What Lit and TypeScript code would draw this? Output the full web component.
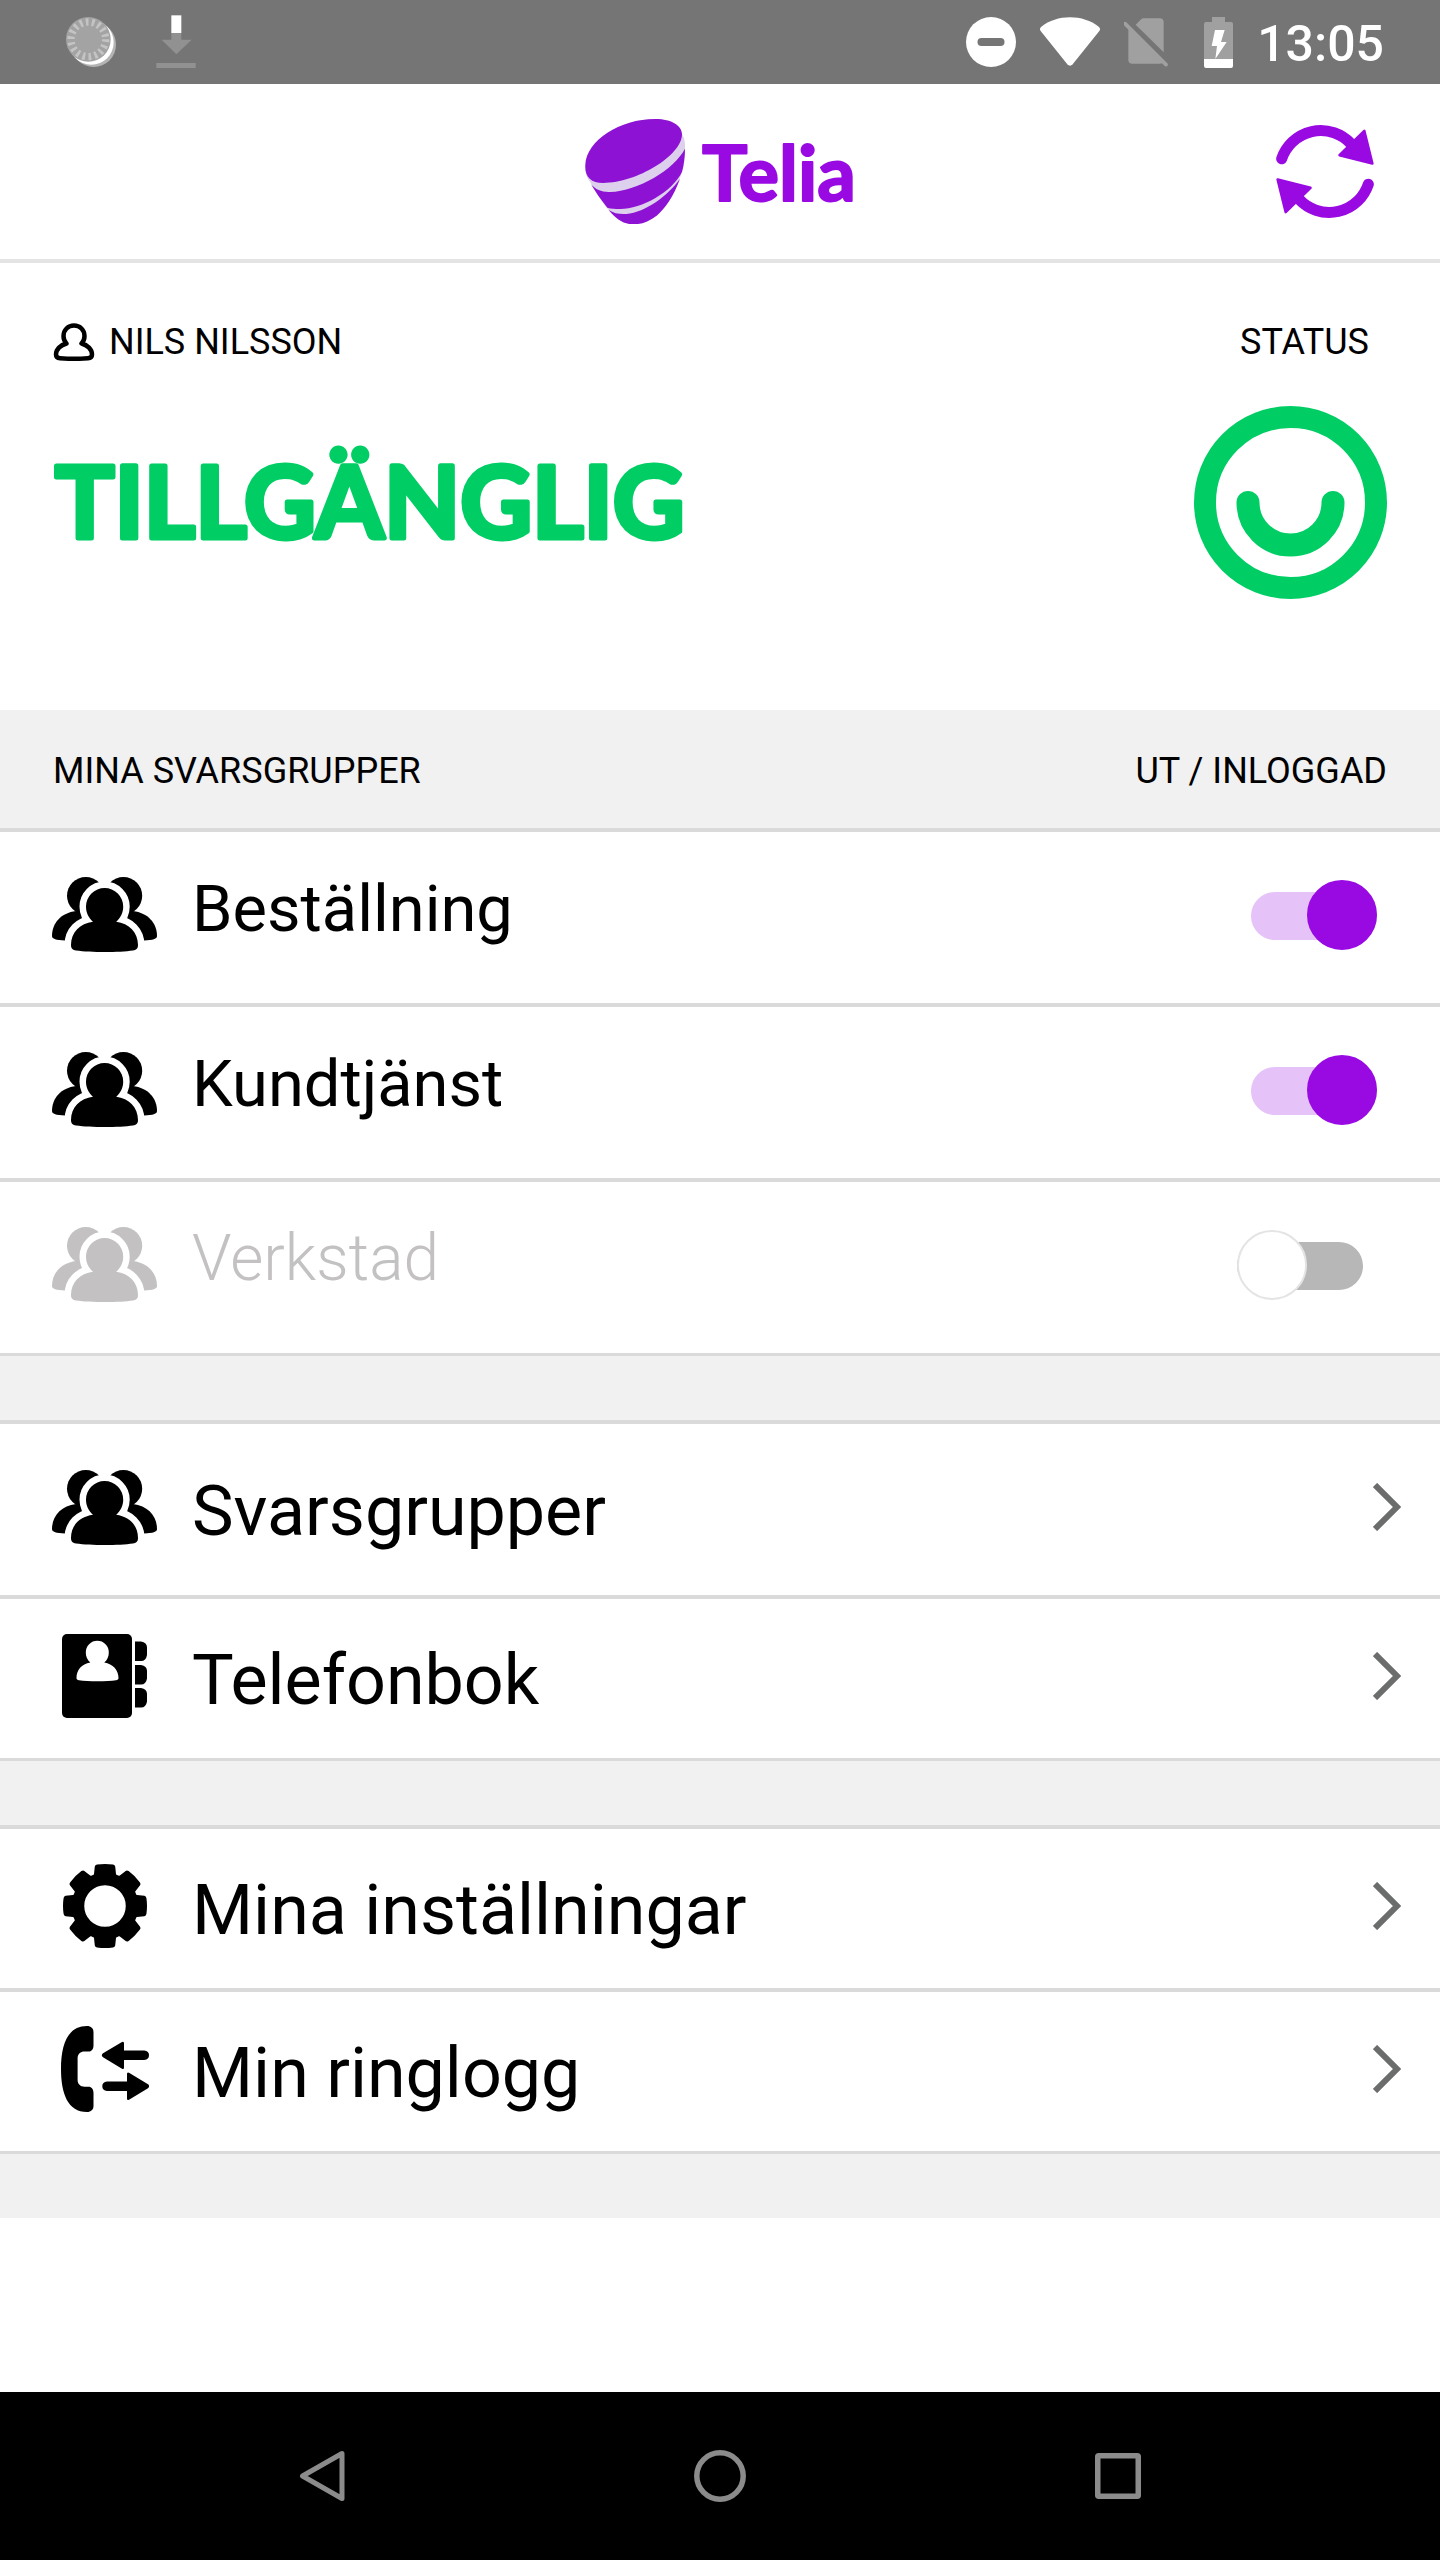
import { LitElement, html, svg, css, nothing } from "lit";
import { customElement, property, state } from "lit/decorators.js";

interface Group {
  name: string;
  on: boolean;
}

type IconName = "people" | "book" | "gear" | "calls";

const people = svg`
  <svg class="icon" width="105" height="75" viewBox="0 0 105 75" fill="currentColor" aria-hidden="true">
    <ellipse cx="33.8" cy="18.8" rx="18.8" ry="18.8"/>
    <ellipse cx="71.4" cy="18.8" rx="18.8" ry="18.8"/>
    <path d="M24 34C9 36 0 46 0 59c0 3 4 4 13 4.500L40 60V34z"/>
    <path d="M81 34c15 2 24 12 24 25 0 3-4 4-13 4.500L65 60V34z"/>
    <path class="halo" d="M52.600 11a18.600 18.600 0 0 1 18.600 18.700c0 6-2.500 11-7 15C77 46.500 86 55 86 68c0 4-2 5-5 5.500-14 2-42 2-57 0-3-.5-5-1.500-5-5.500 0-13 9-21.500 22-23.300-4.500-4-7-9-7-15A18.600 18.600 0 0 1 52.600 11z"/>
    <path d="M52.600 11a18.600 18.600 0 0 1 18.600 18.700c0 6-2.500 11-7 15C77 46.500 86 55 86 68c0 4-2 5-5 5.500-14 2-42 2-57 0-3-.5-5-1.500-5-5.500 0-13 9-21.500 22-23.300-4.500-4-7-9-7-15A18.600 18.600 0 0 1 52.600 11z"/>
  </svg>`;

const book = svg`
  <svg class="icon" width="85" height="84" viewBox="0 0 85 84" fill="currentColor" aria-hidden="true">
    <rect width="70" height="84" rx="5"/>
    <path d="M73 7.500h6q6 1 6 6v7.500q-1 6-6 6h-6zM73 31h6q6 1 6 6v7.500q-1 6-6 6h-6zM73 54h6q6 1 6 6v7.500q-1 6-6 6h-6z"/>
    <path fill="#fff" d="M35.300 6.800a11.500 11.500 0 0 1 11.500 11.700c0 4-1.500 7.500-4.500 10C51 30 56.500 36 56.500 44c0 1.500-1 2-2.500 2.200-9 1.300-28 1.300-37 0-1.500-.2-2.500-.7-2.500-2.200 0-8 5-14 13.800-15.500-3-2.500-4.500-6-4.500-10A11.500 11.500 0 0 1 35.300 6.800z"/>
  </svg>`;

const gear = svg`
  <svg class="icon" width="84" height="84" viewBox="0 0 84 84" fill="currentColor" aria-hidden="true">
    <circle cx="42" cy="42" r="27" fill="none" stroke="currentColor" stroke-width="12.500"/>
    ${[0, 45, 90, 135, 180, 225, 270, 315].map(
      (a) => svg`<path transform=${`rotate(${a} 42 42)`} d="M34 0.600q8-1.200 16 0 2 .4 2.200 2L53 10l3 7H28l3-7 .8-7.400q.2-1.600 2.200-2z"/>`
    )}
  </svg>`;

const calls = svg`
  <svg class="icon" width="88" height="86" viewBox="0 0 88 86" fill="currentColor" aria-hidden="true">
    <path d="M26 0C7 0 0 18 0 43s7 43 26 43c4 0 6.500-2.500 6.500-6V67c0-4-2-6.300-5-6.300h-4c-4 0-6.900-2.700-6.900-6.700V32.300c0-4 2.900-6.700 6.900-6.700h4c3 0 5-2.300 5-6.300V6c0-3.500-2.500-6-6.500-6z"/>
    <path d="M42 27.300 61 16q2-1 2 1.200v7.400h20.300q4.700.4 4.700 4.700t-4.700 4.700H63v7.600q0 2.200-2 1.200L42 31.200q-2.400-1.900 0-3.900z"/>
    <path d="M87 58.300 68 46.700q-2-1-2 1.200v7.700H46q-4.700.4-4.700 4.700T46 65h20v7.600q0 2.200 2 1.200l19-11.600q2.400-1.900 0-3.900z"/>
  </svg>`;

const icons: Record<IconName, unknown> = { people, book, gear, calls };

/** A white row that opens another screen. */
@customElement("menu-link")
export class MenuLink extends LitElement {
  @property() label = "";
  @property() icon: IconName = "people";
  @property() href = "#";

  static styles = css`
    :host {
      display: block;
      background: #fff;
    }
    .row {
      display: flex;
      align-items: center;
      gap: 35px;
      padding: 35px 39px 40px 52px;
      color: #000;
      text-decoration: none;
    }
    :host([tall]) .row {
      padding: 41px 39px 46px 52px;
    }
    .slot {
      display: flex;
      justify-content: center;
      align-items: center;
      flex: none;
      width: 105px;
      height: 84px;
    }
    .icon {
      display: block;
      flex: none;
    }
    .halo {
      stroke: #fff;
      stroke-width: 13;
    }
    .label {
      flex: 1;
      padding-top: 8px;
      font-size: 70px;
      line-height: 74px;
    }
    .chevron {
      flex: none;
      display: block;
    }
  `;

  render() {
    return html`
      <a class="row" href=${this.href}>
        <span class="slot">${icons[this.icon]}</span>
        <span class="label">${this.label}</span>
        <svg class="chevron" width="28" height="48" viewBox="0 0 28 48" fill="none" stroke="#6b6d6c" stroke-width="6" aria-hidden="true">
          <path d="M2 2 24 24 2 46"/>
        </svg>
      </a>
    `;
  }
}

/** A white row with an answer group and its log-in switch. */
@customElement("group-row")
export class GroupRow extends LitElement {
  @property() name = "";
  @property({ type: Boolean }) on = false;

  static styles = css`
    :host {
      display: block;
      background: #fff;
    }
    .row {
      display: flex;
      align-items: center;
      gap: 35px;
      padding: 44px 63px 50px 52px;
      color: #c3c1c2;
      font-size: 64px;
      font-weight: 300;
    }
    .row.on {
      color: #000;
      font-size: 65px;
      font-weight: 400;
    }
    .icon {
      flex: none;
      display: block;
    }
    .halo {
      stroke: #fff;
      stroke-width: 13;
    }
    .label {
      flex: 1;
      padding-bottom: 11px;
      line-height: 66px;
    }
    .switch {
      appearance: none;
      position: relative;
      flex: none;
      width: 140px;
      height: 70px;
      margin: 0;
    }
    .switch::before {
      content: "";
      position: absolute;
      inset: 12px 14px 10px 0;
      border-radius: 24px;
      background: #b7b7b7;
    }
    .switch::after {
      content: "";
      position: absolute;
      inset: 0 auto 0 0;
      width: 70px;
      box-sizing: border-box;
      border: 2px solid #e4e4e4;
      border-radius: 50%;
      background: #fff;
    }
    .switch:checked::before {
      inset: 12px 0 10px 14px;
      background: #e5c2f7;
    }
    .switch:checked::after {
      inset: 0 0 0 auto;
      border-color: #990ae3;
      background: #990ae3;
    }
  `;

  private toggle(e: Event) {
    this.on = (e.target as HTMLInputElement).checked;
  }

  render() {
    return html`
      <label class="row ${this.on ? "on" : ""}">
        ${people}
        <span class="label">${this.name}</span>
        <input class="switch" type="checkbox" role="switch" .checked=${this.on} @change=${this.toggle} />
      </label>
    `;
  }
}

@customElement("app-root")
export class AppRoot extends LitElement {
  @state() private groups: Group[] = [
    { name: "Beställning", on: true },
    { name: "Kundtjänst", on: true },
    { name: "Verkstad", on: false },
  ];

  static styles = css`
    :host {
      display: flex;
      flex-direction: column;
      min-height: 100vh;
      background: #fff;
      color: #000;
      font-family: Roboto, "Liberation Sans", sans-serif;
    }
    svg {
      display: block;
      flex: none;
    }
    button {
      padding: 0;
      border: 0;
      background: none;
      color: inherit;
      font: inherit;
    }
    .system {
      display: flex;
      align-items: center;
      gap: 24px;
      height: 84px;
      padding: 0 56px 0 66px;
      background: #757575;
      color: #fff;
    }
    .notices {
      display: flex;
      align-items: center;
      gap: 40px;
      margin-right: auto;
    }
    .clock {
      font-size: 50px;
      font-weight: 500;
      line-height: 60px;
      padding-top: 3px;
    }
    .header {
      display: grid;
      grid-template-columns: 1fr auto 1fr;
      align-items: center;
      padding: 35px 66px;
      border-bottom: 4px solid #e4e4e4;
    }
    .logo {
      grid-column: 2;
      overflow: visible;
    }
    .wordmark {
      font: 700 76px Lato, sans-serif;
      fill: #990ae3;
      stroke: #990ae3;
      stroke-width: 2;
      stroke-linejoin: round;
    }
    .refresh {
      justify-self: end;
    }
    .presence {
      display: grid;
      grid-template-columns: 1fr auto;
      gap: 42px 20px;
      align-items: center;
      padding: 57px 53px 111px;
    }
    .small {
      font-size: 36px;
      line-height: 44px;
    }
    .user {
      display: flex;
      align-items: center;
      gap: 14px;
    }
    .caption {
      justify-self: end;
      padding-right: 18px;
    }
    .state {
      margin: 0;
    }
    .state-text {
      font: 700 99px Lato, sans-serif;
      fill: #00ce65;
      stroke: #00ce65;
      stroke-width: 5;
      stroke-linejoin: round;
    }
    .bar {
      display: flex;
      justify-content: space-between;
      align-items: center;
      padding: 39px 53px 35px;
      background: #f1f1f1;
    }
    .bar h2 {
      margin: 0;
      font-weight: 400;
    }
    .list {
      display: grid;
      gap: 4px;
      padding: 4px 0 3px;
      background: #dadada;
    }
    .gap {
      height: 64px;
      background: #f1f1f1;
    }
    .main {
      flex: 1;
    }
    .nav {
      background: #000;
      color: #8b8b8b;
    }
    .keys {
      display: grid;
      grid-template-columns: repeat(3, 1fr);
      justify-items: center;
      align-items: center;
      width: 83%;
      height: 168px;
      margin: 0 auto;
    }
  `;

  private systemBar() {
    return html`
      <div class="system">
        <div class="notices">
          <svg width="50" height="50" viewBox="198 51 150 150" aria-hidden="true">
            <circle cx="281" cy="134" r="67" fill="#b4b4b4"/>
            <circle cx="274" cy="127" r="67" fill="#fff"/>
            <circle cx="265" cy="118" r="67" fill="#a3a3a3"/>
            <circle cx="265" cy="118" r="52" fill="none" stroke="#c4c4c4" stroke-width="22" stroke-dasharray="8 10.150"/>
          </svg>
          <svg width="40" height="54" viewBox="467 48 120 160" aria-hidden="true">
            <path fill="#fff" d="M513 48h30v53h-30z"/>
            <path fill="#919191" d="M513 101h30v20h31l-46 44-44-44h29zM468 191h118v15H468z"/>
          </svg>
        </div>
        <svg width="50" height="50" viewBox="0 0 50 50" aria-hidden="true">
          <circle cx="25" cy="25" r="25" fill="#fff"/>
          <rect x="11.500" y="21" width="27" height="8" rx="4" fill="#757575"/>
        </svg>
        <svg width="60" height="50" viewBox="300 51 180 150" aria-hidden="true">
          <path fill="#fff" d="M304 80C350 42 430 42 476 80q7 6 2 13l-80 100q-8 8-16 0L302 93q-5-7 2-13z"/>
        </svg>
        <svg width="56" height="50" viewBox="552 54 168 150" aria-hidden="true">
          <path fill="#a0a0a0" d="M587 77l15-15q4-4 10-4h47q12 0 12 12v90zM565 82l105 106q-3 6-10 6h-83q-12 0-12-12z"/>
          <path stroke="#a0a0a0" stroke-width="11" stroke-linecap="round" d="M555 74 678 197"/>
        </svg>
        <svg width="29" height="51" viewBox="789 48 87 153" aria-hidden="true">
          <path fill="#a0a0a0" d="M813 48h39v15h18q6 0 6 6v106h-87V69q0-6 6-6h18z"/>
          <path fill="#fff" d="M789 174h87v21q0 6-6 6h-75q-6 0-6-6zM822 87h29l-11 36h17l-34 51 5-39h-16z"/>
        </svg>
        <time class="clock">13:05</time>
      </div>
    `;
  }

  private header() {
    return html`
      <header class="header">
        <svg class="logo" width="270" height="105" viewBox="0 0 270 105" role="img" aria-label="Telia">
          <svg width="100" height="105" viewBox="75 87 300 315">
            <path fill="#ddd0ec" d="M76 225C80 150 180 87 286 87c48 0 78 20 80 46 7 10 10 24 9 45-1 22-4 50-12 78-34 85-98 146-143 146-30 0-55-17-76-44-24-32-40-58-52-80-12-12-17-30-16-53z"/>
            <path fill="#8d12d4" d="M76 225C80 150 180 87 286 87c49 0 80 20 80 46 0 64-136 146-236 146-38 0-56-20-54-54z"/>
            <path fill="#8d12d4" d="M93 283c14 16 32 24 57 23 84-3 192-67 225-130 0 22-3 48-9 70-30 60-120 111-186 111-14 0-27-1-38-4-20-24-36-48-49-70z"/>
            <path fill="#8d12d4" d="M146 360c15 10 32 13 53 12 58-6 124-54 161-106-20 55-44 88-70 111-25 19-48 26-70 26-28 0-52-15-74-43z"/>
          </svg>
          <text class="wordmark" x="117" y="82">Telia</text>
        </svg>
        <button class="refresh" type="button" aria-label="Uppdatera">
          <svg width="98" height="95" viewBox="107 102 293 284" fill="none" stroke="#990ae3" aria-hidden="true">
            ${["", "rotate(180 253.5 244)"].map(
              (t) => svg`<g transform=${t || nothing}>
                <path stroke-width="33" stroke-linecap="round" d="M124 206A123 123 0 0 1 330 160"/>
                <path fill="#990ae3" stroke-width="8" stroke-linejoin="round" d="M371 123 395 220 297 195z"/>
              </g>`
            )}
          </svg>
        </button>
      </header>
    `;
  }

  render() {
    return html`
      ${this.systemBar()} ${this.header()}
      <main class="main">
        <section class="presence">
          <div class="user small">
            <svg width="42" height="38" viewBox="0 0 42 38" fill="none" stroke="#000" stroke-width="4.500" stroke-linejoin="round" aria-hidden="true">
              <path d="M21 2.500c6 0 10.500 4.500 10.500 10.500 0 3-1 5.500-3 7.500 6 1.500 10.500 6 10.500 11 0 2.500-1.500 3.600-4 3.800-8 .6-20 .6-28 0-2.500-.2-4-1.300-4-3.800 0-5 4.500-9.500 10.500-11-2-2-3-4.500-3-7.500 0-6 4.500-10.500 10.500-10.500z"/>
            </svg>
            <span>NILS NILSSON</span>
          </div>
          <span class="caption small">STATUS</span>
          <h1 class="state">
            <svg width="680" height="193" viewBox="0 0 680 193">
              <text class="state-text" x="2" y="132">TILLGÄNGLIG</text>
            </svg>
          </h1>
          <button type="button" aria-label="Byt status">
            <svg width="193" height="193" viewBox="0 0 193 193" fill="none" stroke="#00ce65" aria-hidden="true">
              <circle cx="96.500" cy="96.500" r="85.500" stroke-width="22"/>
              <path stroke-width="23" stroke-linecap="round" d="M54 96.500a42.500 42.500 0 0 0 85 0"/>
            </svg>
          </button>
        </section>
        <div class="bar small">
          <h2 class="small">MINA SVARSGRUPPER</h2>
          <span>UT / INLOGGAD</span>
        </div>
        <div class="list">
          ${this.groups.map((g) => html`<group-row .name=${g.name} .on=${g.on}></group-row>`)}
        </div>
        <div class="gap"></div>
        <nav class="list">
          <menu-link tall label="Svarsgrupper" icon="people" href="#svarsgrupper"></menu-link>
          <menu-link label="Telefonbok" icon="book" href="#telefonbok"></menu-link>
        </nav>
        <div class="gap"></div>
        <nav class="list">
          <menu-link label="Mina inställningar" icon="gear" href="#installningar"></menu-link>
          <menu-link label="Min ringlogg" icon="calls" href="#ringlogg"></menu-link>
        </nav>
        <div class="gap"></div>
      </main>
      <footer class="nav">
        <div class="keys">
          <button type="button" aria-label="Tillbaka">
            <svg width="46" height="52" viewBox="0 0 46 52" fill="none" stroke="currentColor" stroke-width="5" stroke-linejoin="round">
              <path d="M43 3.500v45L3.500 26z"/>
            </svg>
          </button>
          <button type="button" aria-label="Hem">
            <svg width="52" height="52" viewBox="0 0 52 52" fill="none" stroke="currentColor" stroke-width="5.500">
              <circle cx="26" cy="26" r="23.200"/>
            </svg>
          </button>
          <button type="button" aria-label="Översikt">
            <svg width="46" height="46" viewBox="0 0 46 46" fill="none" stroke="currentColor" stroke-width="5.500">
              <rect x="2.750" y="2.750" width="40.500" height="40.500" rx="1"/>
            </svg>
          </button>
        </div>
      </footer>
    `;
  }
}
